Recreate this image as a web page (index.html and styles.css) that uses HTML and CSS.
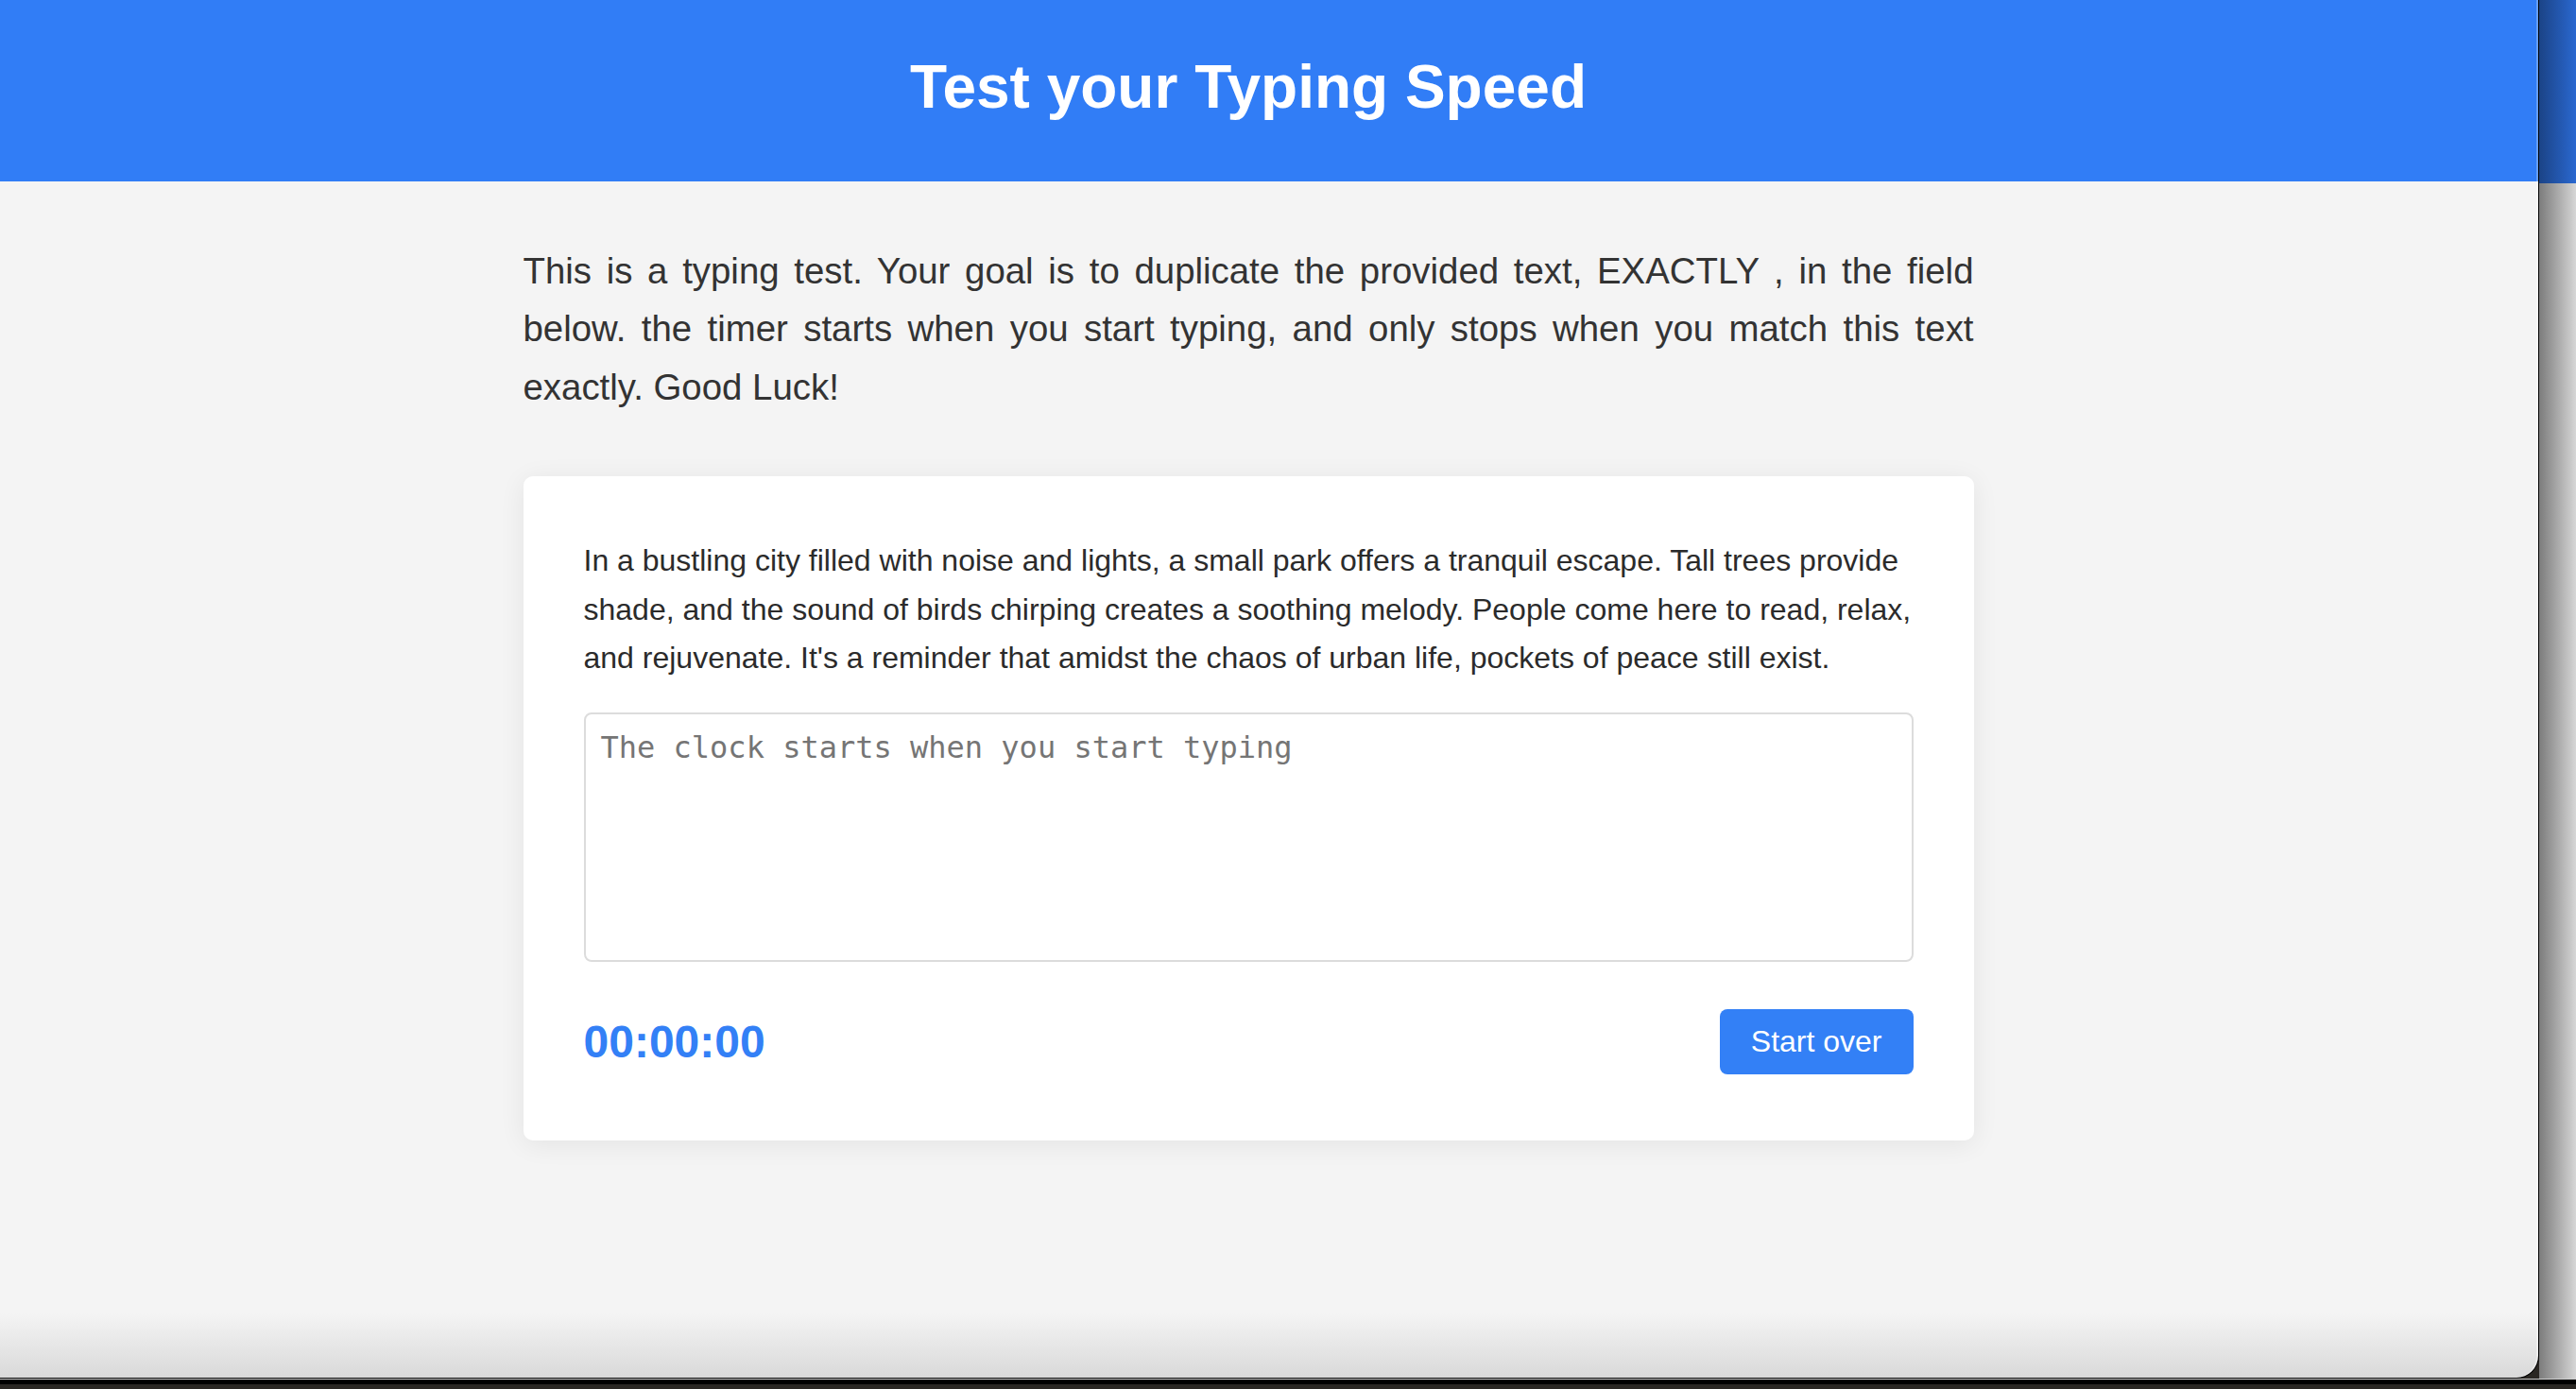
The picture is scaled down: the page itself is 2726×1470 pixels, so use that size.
FILE: index.html
```html
<!DOCTYPE html>
<html lang="en">
<head>
<meta charset="utf-8">
<title>Test your Typing Speed</title>
<link rel="stylesheet" href="styles.css">
</head>
<body>
<div class="screen">
  <div class="window">
    <header class="masthead">
      <h1>Test your Typing Speed</h1>
    </header>
    <main class="main">
      <p class="intro">This is a typing test. Your goal is to duplicate the provided text, EXACTLY , in the field below. the timer starts when you start typing, and only stops when you match this text exactly. Good Luck!</p>
      <section class="card">
        <p class="origin">In a bustling city filled with noise and lights, a small park offers a tranquil escape. Tall trees provide shade, and the sound of birds chirping creates a soothing melody. People come here to read, relax, and rejuvenate. It's a reminder that amidst the chaos of urban life, pockets of peace still exist.</p>
        <textarea class="entry" placeholder="The clock starts when you start typing"></textarea>
        <div class="meta">
          <div class="timer">00:00:00</div>
          <button class="reset" type="button">Start over</button>
        </div>
      </section>
    </main>
  </div>
  <div class="desk">
    <div class="desk-top"></div>
    <div class="desk-bottom"></div>
  </div>
</div>
<div class="dock"></div>
</body>
</html>
```

FILE: styles.css
```css
html, body {
  margin: 0;
  padding: 0;
}
body {
  width: 2726px;
  height: 1470px;
  overflow: hidden;
  background: #2a2723;
  font-family: "Liberation Sans", Arial, Helvetica, sans-serif;
  display: flex;
  flex-direction: column;
}
.screen {
  display: flex;
  height: 1459px;
}
.window {
  width: 2686px;
  flex: none;
  border-right: 1px solid #000;
  border-bottom: 1px solid #000;
  border-bottom-right-radius: 24px;
  overflow: hidden;
  display: flex;
  flex-direction: column;
  background: linear-gradient(to bottom, #f4f4f4 0, #f4f4f4 1390px, #d9d9d9 100%);
  box-shadow: inset -2px 0 0 rgba(255,255,255,0.35);
}
.masthead {
  height: 192px;
  flex: none;
  background: #317df6;
  display: flex;
  align-items: center;
  justify-content: center;
  padding-right: 44px;
  box-shadow: inset -2px 0 0 rgba(255,255,255,0.25);
}
.masthead h1 {
  margin: 0 0 6px 0;
  color: #fff;
  font-size: 64px;
  font-weight: 700;
  line-height: 1.15;
}
.main {
  padding: 64px 44px 0 0;
}
.intro {
  width: 1535px;
  margin: 0 auto 64px auto;
  font-size: 38.4px;
  line-height: 61.44px;
  color: #333;
  text-align: justify;
}
.card {
  width: 1535px;
  box-sizing: border-box;
  margin: 0 auto;
  background: #fff;
  border-radius: 10px;
  padding: 64px 64px 70px 64px;
  box-shadow: 0 4px 28px rgba(0,0,0,0.07);
}
.origin {
  margin: 0 0 32px 0;
  font-size: 32px;
  line-height: 51.2px;
  color: #2b2b2b;
}
.entry {
  display: block;
  width: 100%;
  height: 264px;
  box-sizing: border-box;
  border: 2px solid #dcdcdc;
  border-radius: 8px;
  padding: 16px;
  font-family: "DejaVu Sans Mono", "Liberation Mono", monospace;
  font-size: 32px;
  resize: none;
  background: #fff;
  outline: none;
}
.entry::placeholder {
  color: #757575;
}
.meta {
  margin-top: 50px;
  display: flex;
  justify-content: space-between;
  align-items: center;
}
.timer {
  font-size: 48px;
  font-weight: 700;
  color: #3380f6;
  line-height: 1.15;
}
.reset {
  font-family: "Liberation Sans", Arial, Helvetica, sans-serif;
  font-size: 32px;
  line-height: 37px;
  color: #fff;
  background: #3380f6;
  border: none;
  border-radius: 8px;
  padding: 16px 33px;
}
.desk {
  flex: 1;
  display: flex;
  flex-direction: column;
}
.desk-top {
  height: 194px;
  background: linear-gradient(to right, #1b4386, #2a68d0);
}
.desk-bottom {
  flex: 1;
  background: linear-gradient(to right, #7c7c7c, #d6d6d6);
}
.dock {
  flex: 1;
  border-top: 1px solid #cfcfcf;
  background: linear-gradient(to bottom, #000 0, #000 5px, #2a2723 5px);
}
```
